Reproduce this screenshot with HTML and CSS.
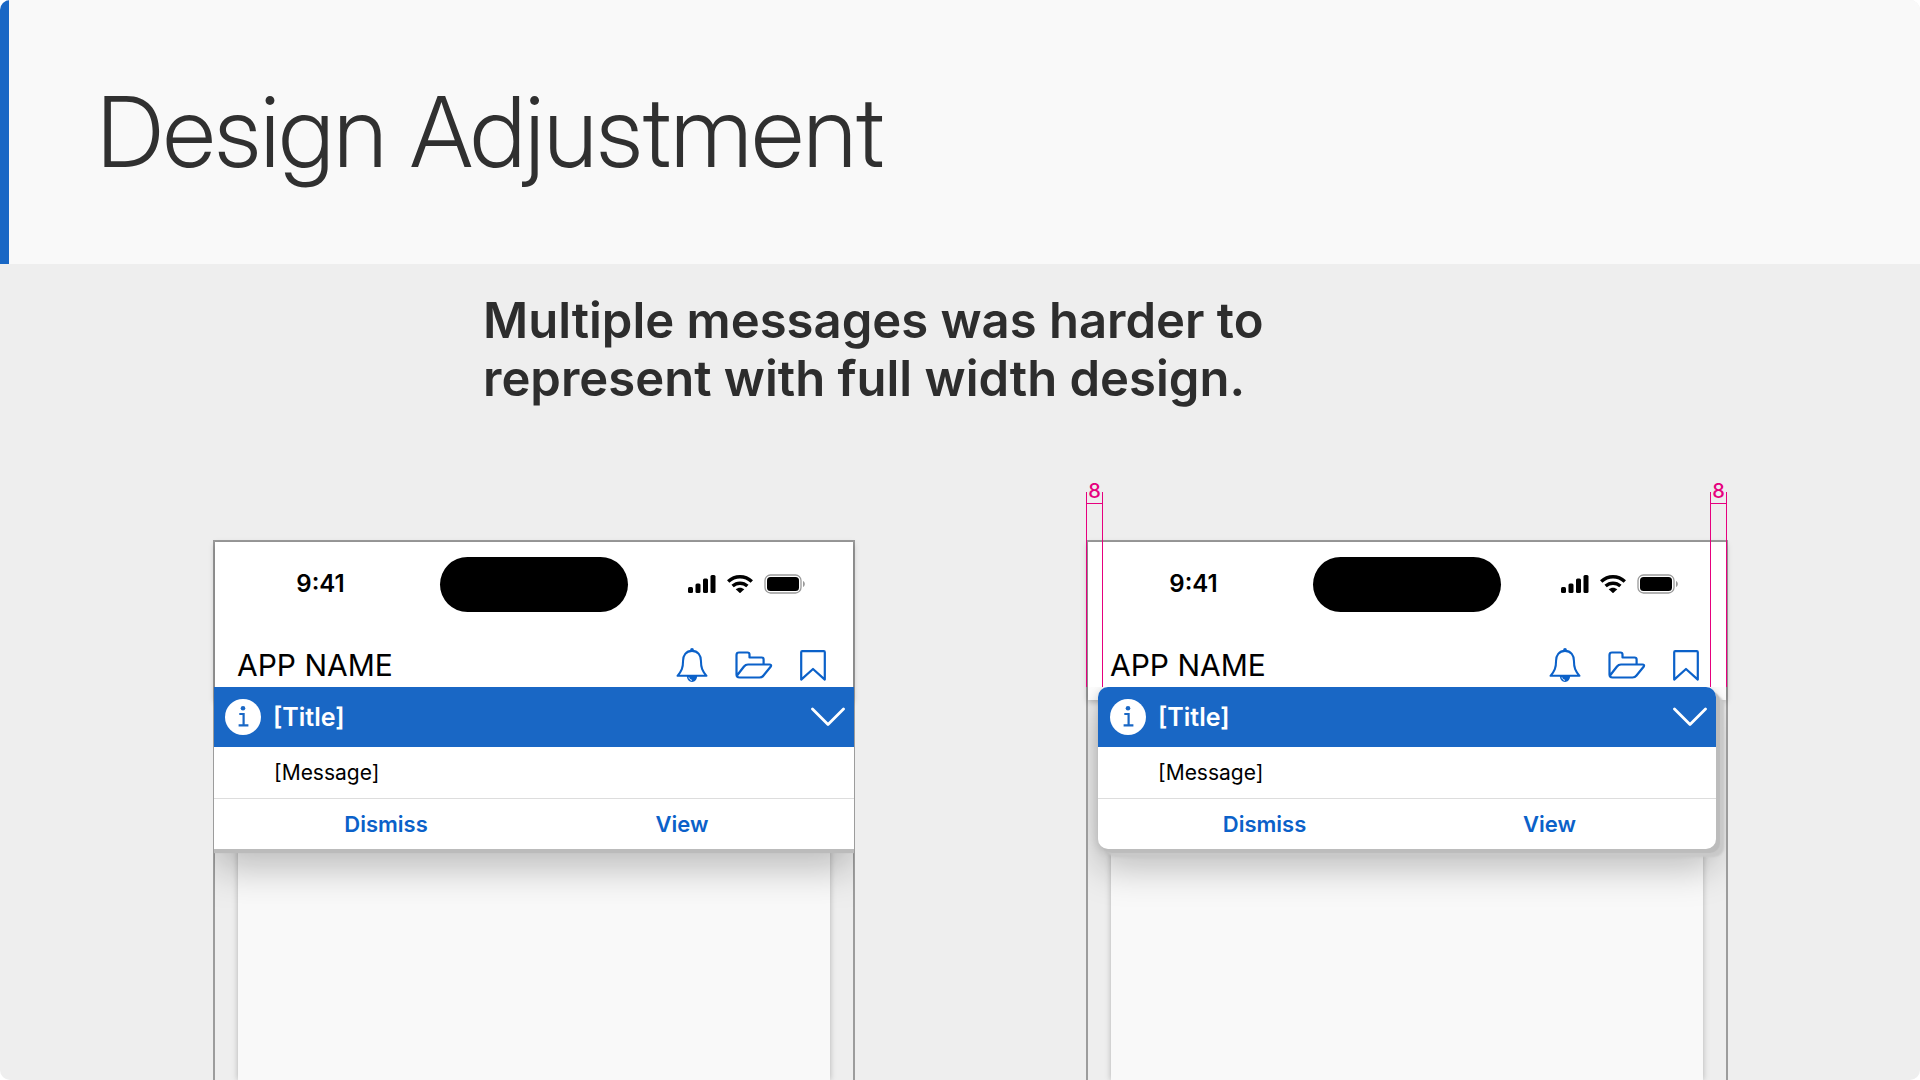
FILE: index.html
```html
<!DOCTYPE html>
<html lang="en">
<head>
<meta charset="utf-8">
<meta name="viewport" content="width=device-width, initial-scale=1">
<title>Design Adjustment</title>
<link rel="stylesheet" href="styles.css">
</head>
<body>
<svg class="sprite" aria-hidden="true">
  <symbol id="signal" viewBox="0 0 28 18">
    <rect x="0" y="12" width="5" height="6" rx="1.5"/><rect x="7.500" y="8.500" width="5" height="9.500" rx="1.500"/><rect x="15" y="3.500" width="5" height="14.500" rx="1.500"/><rect x="22.500" y="0" width="5" height="18" rx="1.500"/>
  </symbol>
  <symbol id="wifi" viewBox="0 0 26 18">
    <g fill="none" stroke="currentColor" stroke-width="3.400"><path d="M1.200 6.600C8 .1 18 .1 24.800 6.600"/><path d="M5.600 11.100C10 7.200 16 7.200 20.400 11.100"/></g>
    <path d="M8.700 14.300C11.300 12.100 14.700 12.100 17.300 14.300L13 18.200z"/>
  </symbol>
  <symbol id="battery" viewBox="0 0 41 20">
    <rect x="1" y="1" width="36" height="18" rx="5.500" fill="none" stroke="#999" stroke-width="1.300"/>
    <rect x="3" y="3" width="32" height="14" rx="3.500"/>
    <path d="M39 7c2.400 1 2.400 5 0 6z" fill="#999"/>
  </symbol>
  <symbol id="bell" viewBox="0 0 34 36">
    <g fill="none" stroke="currentColor" stroke-width="2.200" stroke-linejoin="round"><path d="M17 3C10.500 3 7.500 8 7.500 13.500C7.500 21 6 24.500 1.600 29.500H32.400C28 24.500 26.500 21 26.500 13.500C26.500 8 23.500 3 17 3z"/></g>
    <circle cx="17" cy="2" r="2"/><path d="M11.500 29.500H22.500C22.500 33.500 20 36 17 36S11.500 33.500 11.500 29.500z"/><path d="M13.700 31.200C14.200 33 15.300 34 17 34.300" fill="none" stroke="#fff" stroke-width="1"/>
  </symbol>
  <symbol id="folder" viewBox="0 0 38 28">
    <g fill="none" stroke="currentColor" stroke-width="2.200" stroke-linejoin="round"><path d="M28.600 13V8.500Q28.600 6.500 26.600 6.500H14.500V3.500Q14.500 1.500 12.500 1.500H4Q1.500 1.500 1.500 4V23.500Q1.500 26.500 4.500 26.500H24.500Q27 26.500 28.500 24.500L35.800 15.500Q36.800 13.500 34.500 13.500H13Q10.500 13.500 9 15.500L2 24.500"/></g>
  </symbol>
  <symbol id="bookmark" viewBox="0 0 26 31">
    <path d="M1.200 2.200Q1.200 1.200 2.200 1.200H23.800Q24.800 1.200 24.800 2.200V29.600L13 19L1.200 29.600z" fill="none" stroke="currentColor" stroke-width="2.200" stroke-linejoin="round"/>
  </symbol>
  <symbol id="info" viewBox="0 0 36 36">
    <circle cx="18" cy="18" r="18" fill="#fff"/>
    <circle cx="18" cy="9.300" r="2.300" fill="#1967c5"/>
    <path d="M14.300 15H18.600V26.200M13.600 26.300H23.400" fill="none" stroke="#1967c5" stroke-width="2.200"/>
  </symbol>
  <symbol id="chevron" viewBox="0 0 34 20">
    <path d="M1.500 2L17 17.500L32.500 2" fill="none" stroke="#fff" stroke-width="2.800" stroke-linecap="round" stroke-linejoin="round"/>
  </symbol>
</svg>
<main class="slide">
  <header class="slide-header"><h1>Design Adjustment</h1></header>
  <p class="lead">Multiple messages was harder to represent with full width design.</p>
  <div class="phones">
    <section class="phone">
      <div class="top">
        <div class="status">
          <span class="time">9:41</span>
          <span class="island"></span>
          <span class="indicators">
            <svg class="signal"><use href="#signal"/></svg>
            <svg class="wifi"><use href="#wifi"/></svg>
            <svg class="battery"><use href="#battery"/></svg>
          </span>
        </div>
        <div class="app-bar">
          <h2>APP NAME</h2>
          <div class="tools">
            <button type="button" aria-label="Notifications"><svg class="bell"><use href="#bell"/></svg></button>
            <button type="button" aria-label="Files"><svg class="folder"><use href="#folder"/></svg></button>
            <button type="button" aria-label="Bookmarks"><svg class="bookmark"><use href="#bookmark"/></svg></button>
          </div>
        </div>
      </div>
      <div class="page"></div>
      <article class="banner banner-full">
        <div class="banner-title">
          <svg class="info"><use href="#info"/></svg>
          <h3>[Title]</h3>
          <button type="button" aria-label="Expand"><svg class="chevron"><use href="#chevron"/></svg></button>
        </div>
        <p class="message">[Message]</p>
        <div class="actions"><button type="button">Dismiss</button><button type="button">View</button></div>
      </article>
    </section>
    <section class="phone">
      <div class="top">
        <div class="status">
          <span class="time">9:41</span>
          <span class="island"></span>
          <span class="indicators">
            <svg class="signal"><use href="#signal"/></svg>
            <svg class="wifi"><use href="#wifi"/></svg>
            <svg class="battery"><use href="#battery"/></svg>
          </span>
        </div>
        <div class="app-bar">
          <h2>APP NAME</h2>
          <div class="tools">
            <button type="button" aria-label="Notifications"><svg class="bell"><use href="#bell"/></svg></button>
            <button type="button" aria-label="Files"><svg class="folder"><use href="#folder"/></svg></button>
            <button type="button" aria-label="Bookmarks"><svg class="bookmark"><use href="#bookmark"/></svg></button>
          </div>
        </div>
      </div>
      <div class="page"></div>
      <article class="banner banner-inset">
        <div class="banner-title">
          <svg class="info"><use href="#info"/></svg>
          <h3>[Title]</h3>
          <button type="button" aria-label="Expand"><svg class="chevron"><use href="#chevron"/></svg></button>
        </div>
        <p class="message">[Message]</p>
        <div class="actions"><button type="button">Dismiss</button><button type="button">View</button></div>
      </article>
      <div class="measure measure-left"><span>8</span></div>
      <div class="measure measure-right"><span>8</span></div>
    </section>
  </div>
</main>
</body>
</html>
```
FILE: styles.css
```css
* { box-sizing: border-box; }
body {
  margin: 0;
  background: #fff;
  color: #000;
  font-family: Inter, "Liberation Sans", sans-serif;
}
h1, h2, h3, p { margin: 0; }
button {
  display: flex;
  align-items: center;
  justify-content: center;
  padding: 0;
  border: 0;
  background: none;
  color: #0b61c9;
  font: inherit;
  cursor: pointer;
}
svg { display: block; fill: currentColor; }
.sprite { position: absolute; width: 0; height: 0; }

.slide {
  display: flex;
  flex-direction: column;
  min-height: 100vh;
  overflow: hidden;
  border-radius: 10px;
  background: #eee;
}
.slide-header {
  padding: 72px 88px;
  border-left: 9px solid #1967c5;
  background: #f9f9f9;
}
h1 {
  color: #303030;
  font-family: "Inter Display", Inter, "Liberation Sans", sans-serif;
  font-size: 98px;
  font-weight: 300;
  font-variation-settings: "opsz" 32;
  line-height: 120px;
}
.lead {
  max-width: 860px;
  margin-left: 483px;
  padding: 28px 0;
  color: #2d2d2d;
  font-size: 49px;
  font-weight: 600;
  line-height: 58px;
}
.phones {
  display: grid;
  flex: 1;
  grid-template-columns: 1fr 1fr;
  gap: 231px;
  padding: 104px 192px 0 213px;
}
.phone {
  position: relative;
  display: flex;
  flex-direction: column;
  min-height: 540px;
  border: 2px solid #9c9c9c;
  border-bottom: 0;
}
.top {
  position: relative;
  height: 158px;
  background: #fff;
  box-shadow: 0 2px 6px rgba(0, 0, 0, .25);
}
.status {
  display: grid;
  grid-template-columns: 1fr 188px 1fr;
  align-items: center;
  padding-top: 15px;
}
.time {
  padding: 0 14px 2px 0;
  font-size: 24px;
  font-weight: 600;
  line-height: 28px;
  text-align: center;
}
.island { height: 55px; border-radius: 28px; background: #000; }
.indicators {
  display: flex;
  align-items: center;
  justify-content: center;
  gap: 11px;
  padding: 0 0 2px 11px;
}
.signal { width: 28px; height: 18px; }
.wifi { width: 26px; height: 18px; }
.battery { width: 41px; height: 20px; }
.app-bar {
  display: flex;
  align-items: center;
  justify-content: space-between;
  padding: 33px 27px 0 22px;
}
h2 { font-size: 30px; font-weight: 400; line-height: 40px; }
.tools { display: flex; align-items: center; gap: 27px; }
.bell { width: 32px; height: 36px; }
.folder { width: 38px; height: 28px; }
.bookmark { width: 26px; height: 31px; }
.page {
  flex: 1;
  margin: 0 23px;
  background: #f9f9f9;
  box-shadow: 0 0 6px rgba(0, 0, 0, .25);
}
.banner { position: absolute; top: 145px; background: #fff; }
.banner-full {
  right: -1px;
  left: -1px;
  box-shadow: 0 4px 1px #bbb, 0 18px 38px rgba(0, 0, 0, .26);
  clip-path: inset(0 0 -80px 0);
}
.banner-inset {
  right: 10px;
  left: 10px;
  border-radius: 10px;
  box-shadow: 4px 4px 1px #bcbcbc, 8px 8px 2px #c9c9c9, 0 2px 8px rgba(0, 0, 0, .15), 0 18px 38px rgba(0, 0, 0, .26);
  clip-path: inset(0 -10px -80px -10px);
}
.banner-title {
  display: flex;
  align-items: center;
  height: 60px;
  padding: 0 9px 0 11px;
  background: #1967c5;
  color: #fff;
}
.banner-inset .banner-title {
  padding-left: 12px;
  border-radius: 10px 10px 0 0;
}
.info { width: 36px; height: 36px; }
h3 { margin: 0 auto 0 12px; font-size: 25px; font-weight: 600; line-height: 30px; }
.chevron { width: 34px; height: 20px; }
.message {
  padding: 10px 60px;
  border-bottom: 1px solid #ddd;
  font-size: 21px;
  line-height: 31px;
}
.actions {
  display: grid;
  grid-template-columns: 1fr 1fr;
  padding: 0 24px;
}
.actions button { height: 50px; font-size: 22px; font-weight: 600; }

.measure {
  position: absolute;
  top: -50px;
  width: 17px;
  height: 195px;
  border: solid #e6007e;
  border-width: 0 1px;
}
.measure::after {
  position: absolute;
  top: 11px;
  right: 0;
  left: 0;
  height: 1px;
  background: #e6007e;
  content: "";
}
.measure span {
  position: absolute;
  top: -13px;
  right: 0;
  left: 0;
  color: #e6007e;
  font-size: 20px;
  font-weight: 500;
  line-height: 24px;
  text-align: center;
}
.measure-left { left: -2px; }
.measure-right { right: -1px; }
```
